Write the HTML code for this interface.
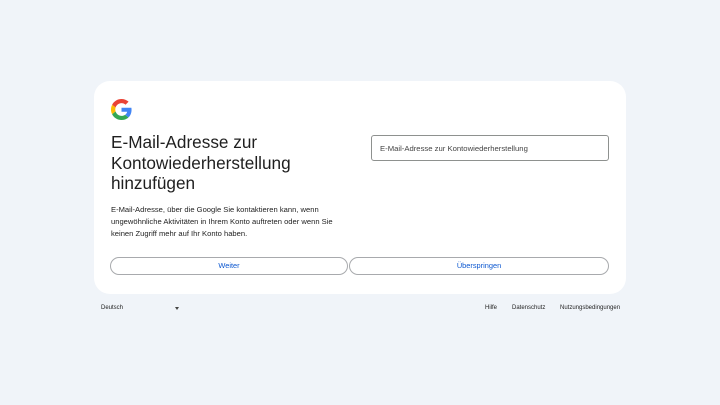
<!DOCTYPE html>
<html><head><style>
body{margin:0;width:720px;height:405px;background:#f0f4f9;font-family:"Liberation Sans",sans-serif;position:relative;overflow:hidden}
.card{position:absolute;left:94px;top:81px;width:532px;height:213px;background:#fff;border-radius:16px}
.abs{position:absolute}
h1{position:absolute;left:111px;top:132px;margin:0;font-weight:400;font-size:17.2px;line-height:20.5px;color:#1f1f1f}
.p{left:111px;top:204px;font-size:7.6px;line-height:12px;color:#1f1f1f;width:240px}
.input{left:371px;top:135px;border:1px solid #8e918f;border-radius:3px;font-size:7.7px;color:#444;line-height:25px;padding-left:8px;box-sizing:border-box;width:238px;height:26px}
.btn{top:257px;height:18px;border:1px solid #a8aaad;border-radius:10px;box-sizing:border-box;color:#0b57d0;font-size:7.4px;text-align:center;line-height:16px}
.f{top:305px;font-size:6px;color:#1f1f1f}
</style></head><body>
<div class="card"></div>
<svg class="abs" style="left:111px;top:99px" width="21" height="21" viewBox="0 0 48 48">
<path fill="#EA4335" d="M24 9.5c3.54 0 6.710 1.22 9.21 3.6l6.85-6.85C35.9 2.38 30.47 0 24 0 14.62 0 6.51 5.38 2.56 13.22l7.98 6.19C12.43 13.72 17.74 9.5 24 9.5z"/>
<path fill="#4285F4" d="M46.98 24.55c0-1.570-.15-3.09-.38-4.55H24v9.02h12.94c-.58 2.96-2.26 5.48-4.78 7.18l7.73 6c4.51-4.18 7.09-10.36 7.09-17.65z"/>
<path fill="#FBBC05" d="M10.53 28.59c-.48-1.45-.76-2.99-.76-4.59s.27-3.14.76-4.59l-7.98-6.19C.92 16.46 0 20.12 0 24c0 3.88.92 7.54 2.56 10.78l7.97-6.19z"/>
<path fill="#34A853" d="M24 48c6.48 0 11.93-2.13 15.89-5.81l-7.73-6c-2.15 1.45-4.92 2.3-8.16 2.3-6.26 0-11.570-4.22-13.47-9.91l-7.98 6.19C6.51 42.62 14.62 48 24 48z"/>
</svg>
<h1>E-Mail-Adresse zur<br>Kontowiederherstellung<br>hinzufügen</h1>
<div class="abs p">E-Mail-Adresse, über die Google Sie kontaktieren kann, wenn ungewöhnliche Aktivitäten in Ihrem Konto auftreten oder wenn Sie keinen Zugriff mehr auf Ihr Konto haben.</div>
<div class="abs input">E-Mail-Adresse zur Kontowiederherstellung</div>
<div class="abs btn" style="left:110px;width:238px">Weiter</div>
<div class="abs btn" style="left:349px;width:260px">Überspringen</div>
<div class="abs f" style="left:101px">Deutsch</div>
<div class="abs" style="left:175px;top:307px;width:0;height:0;border-left:2.5px solid transparent;border-right:2.5px solid transparent;border-top:3px solid #444"></div>
<div class="abs f" style="left:485px">Hilfe</div>
<div class="abs f" style="left:512px">Datenschutz</div>
<div class="abs f" style="left:560px">Nutzungsbedingungen</div>
</body></html>
